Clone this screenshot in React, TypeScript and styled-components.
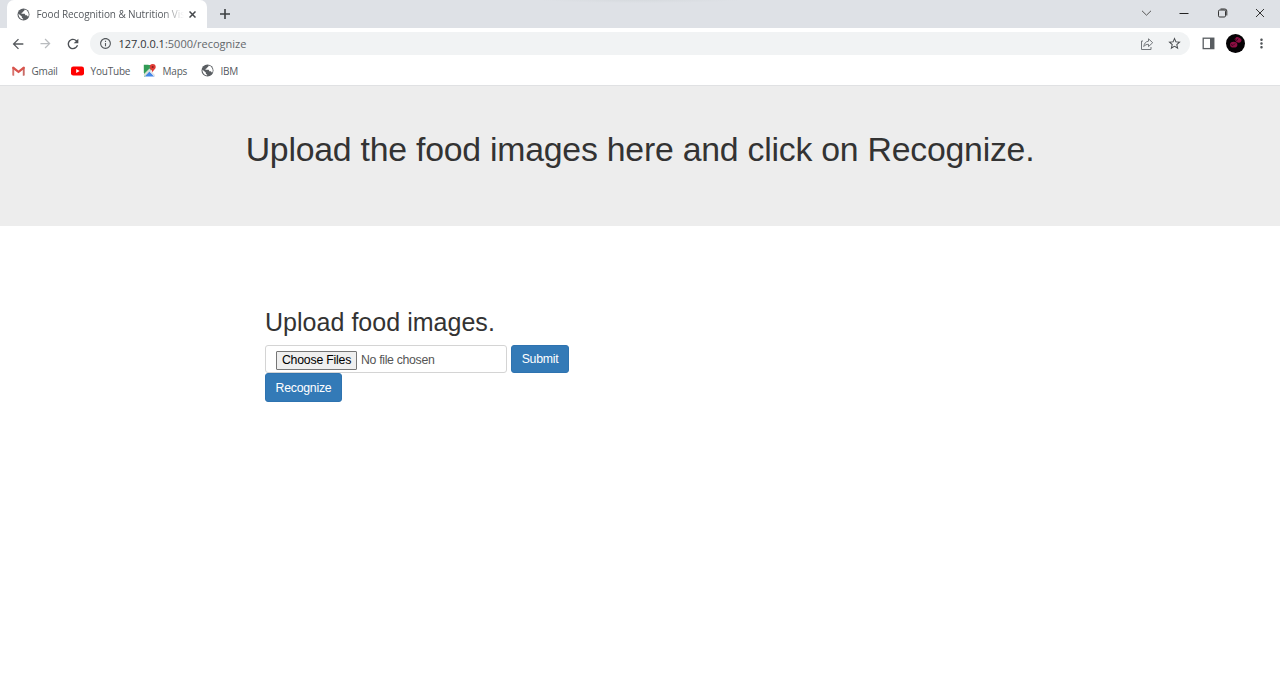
import React from "react";
import styled, { createGlobalStyle } from "styled-components";
import { MdInfoOutline, MdStarBorder, MdArrowBack, MdArrowForward, MdRefresh, MdMoreVert } from "react-icons/md";

const GlobalStyle = createGlobalStyle`
  * { box-sizing: border-box; }
  body { margin: 0; background: #fff; font-family: "Liberation Sans", Arial, sans-serif; color: #333; }
  svg { display: block; flex: none; }
`;

const Window = styled.div`
  height: 680px;
  display: flex;
  flex-direction: column;
  overflow: hidden;
`;

const Chrome = styled.header`
  font-family: "Open Sans", sans-serif;
  color: #5f6368;
`;

const TabStrip = styled.div`
  height: 28px;
  display: flex;
  background: radial-gradient(ellipse 100px 3px at 640px 0, #d6dade, transparent) #dee1e6;
  padding-left: 7px;
`;

const Tab = styled.div`
  width: 200px;
  height: 28px;
  display: flex;
  align-items: center;
  padding: 0 9px 0 10px;
  background: #fff;
  border-radius: 7px 7px 0 0;
`;

const TabTitle = styled.span`
  width: 147px;
  margin: 0 5px 0 6.5px;
  white-space: nowrap;
  font-size: 10px;
  line-height: 16px;
  letter-spacing: -0.09px;
  color: #55595e;
  mask-image: linear-gradient(90deg, #000 125px, transparent 147px);
`;

const NewTab = styled.div`
  padding: 8px 0 0 12px;
`;

const WindowControls = styled.div`
  margin-left: auto;
  display: flex;
  align-items: center;
  gap: 26.5px;
  height: 25px;
  padding-right: 15px;
`;

const Toolbar = styled.div`
  height: 30px;
  display: flex;
  align-items: center;
  padding: 1px 10px 0 10px;
`;

const NavButtons = styled.div`
  display: flex;
  gap: 12px;
  width: 80px;
`;

const AddressBar = styled.div`
  width: 1100px;
  height: 23px;
  display: flex;
  align-items: center;
  padding: 0 8px 0 8.5px;
  background: #f1f3f4;
  border-radius: 12px;
`;

const Address = styled.span`
  margin-left: 7px;
  font-size: 11px;
  line-height: 16px;
  color: #63676b;
  white-space: nowrap;
`;

const Host = styled.span`
  color: #303236;
`;

const AddressActions = styled.div`
  margin-left: auto;
  display: flex;
  align-items: center;
  gap: 13px;
`;

const ToolbarActions = styled.div`
  margin-left: 12px;
  display: flex;
  align-items: center;
`;

const Avatar = styled.div`
  margin: 0 9px 0 11px;
`;

const Bookmarks = styled.nav`
  height: 28px;
  display: flex;
  align-items: center;
  padding: 0 0 2px 12px;
  border-bottom: 1px solid #e0e1e3;
`;

const Bookmark = styled.div<{ $width: number }>`
  width: ${(p) => p.$width}px;
  display: flex;
  align-items: center;
  gap: 6.5px;
  font-size: 10px;
  line-height: 14px;
  letter-spacing: -0.2px;
  color: #55595e;
  white-space: nowrap;
`;

const Jumbotron = styled.section`
  height: 140px;
  padding-top: 43px;
  background: #ededed;
  text-align: center;
`;

const Title = styled.h1`
  margin: 0;
  font-size: 33.8px;
  font-weight: 400;
  line-height: 40px;
  letter-spacing: -0.23px;
  white-space: nowrap;
`;

const Content = styled.main`
  padding: 82px 0 0 265px;
`;

const Subtitle = styled.h2`
  margin: 0 0 8px;
  font-size: 25px;
  font-weight: 400;
  line-height: 29px;
  letter-spacing: 0.03px;
`;

const FormRow = styled.div`
  display: flex;
  gap: 4px;
`;

const FileField = styled.div`
  width: 242px;
  height: 28px;
  display: flex;
  align-items: center;
  gap: 4px;
  padding: 2px 10px 0;
  border: 1px solid #d4d4d4;
  border-radius: 3px;
  font-size: 12.3px;
  letter-spacing: -0.32px;
  color: #555;
`;

const ChooseButton = styled.button`
  width: 81px;
  height: 19px;
  padding: 0;
  border: 1px solid #767676;
  border-radius: 1px;
  background: #efefef;
  font: 12.3px/16px "Liberation Sans", Arial, sans-serif;
  letter-spacing: -0.22px;
  color: #000;
  white-space: nowrap;
`;

const PrimaryButton = styled.button<{ $width: number; $height: number }>`
  display: block;
  width: ${(p) => p.$width}px;
  height: ${(p) => p.$height}px;
  padding: 0;
  border: 1px solid #2e73b0;
  border-radius: 3px;
  background: #337ab7;
  color: #fff;
  font: 12.3px/18px "Liberation Sans", Arial, sans-serif;
  letter-spacing: -0.26px;
`;

const Globe = () => (
  <svg width="13" height="13" viewBox="0 0 13 13">
    <circle cx="6.5" cy="6.5" r="6" fill="#5a5e62" />
    <path d="M7.6 1.6c-.1 1.1-.5 1.7-1.5 1.8-.2 1-.9 1.2-1.6 1.5v.9h2.7c.8 0 1 .6 1 1.4h1.1c.7 0 1 .4 1.1 1l.9.3A5 5 0 0 0 7.6 1.6zM1.5 5.7c-.2 3.3 2 5.6 4.6 5.8v-1c-1 0-1.3-.5-1.3-1.4v-.5z" fill="#fff" />
  </svg>
);

export default function App() {
  return (
    <Window>
      <GlobalStyle />
      <Chrome>
        <TabStrip>
          <Tab>
            <Globe />
            <TabTitle>Food Recognition &amp; Nutrition Vis</TabTitle>
            <svg width="7" height="7" viewBox="0 0 7 7" stroke="#45484c" strokeWidth="1.5"><path d="M.5.5l6 6M6.5.5l-6 6" /></svg>
          </Tab>
          <NewTab>
            <svg width="12" height="12" viewBox="0 0 12 12" stroke="#3c4043" strokeWidth="1.6"><path d="M6 1v10M1 6h10" /></svg>
          </NewTab>
          <WindowControls>
            <svg width="11" height="10" viewBox="0 0 11 10" fill="none" stroke="#555" strokeWidth="1"><path d="M1 2.8l4.5 4.4L10 2.8" /></svg>
            <svg width="12" height="10" viewBox="0 0 12 10" stroke="#222"><path d="M1.5 5.5h9" /></svg>
            <svg width="12" height="10" viewBox="0 0 12 10" fill="none" stroke="#333"><rect x="1.5" y="2" width="7" height="7" rx="1.2" /><path d="M3.5 1h4.3a2 2 0 0 1 2 2v4.5" /></svg>
            <svg width="10" height="10" viewBox="0 0 10 10" stroke="#333"><path d="M1 1l8 8M9 1l-8 8" /></svg>
          </WindowControls>
        </TabStrip>
        <Toolbar>
          <NavButtons>
            <MdArrowBack size={16} color="#55595d" />
            <MdArrowForward size={15} color="#b9bcbf" />
            <MdRefresh size={16} color="#4d5156" />
          </NavButtons>
          <AddressBar>
            <MdInfoOutline size={13} color="#55595d" />
            <Address><Host>127.0.0.1</Host>:5000/recognize</Address>
            <AddressActions>
              <svg width="14" height="14" viewBox="0 0 14 14" fill="none" stroke="#73777b" strokeWidth="1" strokeLinejoin="round">
                <path d="M3 4H1.5v8.5h9.5V10" />
                <path d="M3.8 9.5C4.2 6.4 5.8 4.4 8.5 4.2V1.8l4.2 3.9-4.2 3.9V7.3C6.5 7.3 5 8 3.8 9.5z" />
              </svg>
              <MdStarBorder size={15} color="#484c50" />
            </AddressActions>
          </AddressBar>
          <ToolbarActions>
            <svg width="13" height="13" viewBox="0 0 13 13"><rect x="1.2" y="1.2" width="10.6" height="10.4" fill="none" stroke="#595d61" strokeWidth="1.3" /><path d="M8 1h4v11H8z" fill="#595d61" /></svg>
            <Avatar>
              <svg width="19" height="19" viewBox="0 0 19 19"><circle cx="9.5" cy="9.5" r="9.5" fill="#050305" /><g fill="#8d0e43"><ellipse cx="12.2" cy="5.8" rx="3.3" ry="2.5" transform="rotate(25 12 6)" /><ellipse cx="7.7" cy="10.7" rx="3.7" ry="2.9" /></g><path d="M8 5l3 1.5 1-2M5 10.5l2 1 2-2" stroke="#3c061f" fill="none" /></svg>
            </Avatar>
            <MdMoreVert size={15} color="#505458" />
          </ToolbarActions>
        </Toolbar>
        <Bookmarks>
          <Bookmark $width={59}>
            <svg width="13" height="10" viewBox="0 0 13 10"><path d="M.3 1h1.9v8.7H1a.7.7 0 0 1-.7-.7z" fill="#d87570" /><path d="M10.8 1h1.9v8a.7.7 0 0 1-.7.7h-1.2z" fill="#c96b66" /><path d="M.3 1.6Q.6 0 2.1.9l4.4 3.5L10.9.9q1.5-.9 1.8.7v1L6.5 7.2.3 2.6z" fill="#d9534c" /></svg>
            Gmail
          </Bookmark>
          <Bookmark $width={72}>
            <svg width="13" height="10" viewBox="0 0 13 10"><rect y=".4" width="13" height="9.2" rx="2.4" fill="#f00" /><path d="M5.2 3v4l3.5-2z" fill="#fff" /></svg>
            YouTube
          </Bookmark>
          <Bookmark $width={58}>
            <svg width="13" height="13" viewBox="0 0 13 13"><path d="M1 1h7v5L2 12.5H1z" fill="#34a35a" /><path d="M6 7l5.5 5.5H2z" fill="#4285e8" /><path d="M7 6l5 5v1.5h-1L6 7z" fill="#dfe3e8" /><path d="M.5 10.5l6-6 1.5 1.5-6.3 6.5z" fill="#d9dfd7" /><path d="M.8.8h4.7v3.7L.8 9z" fill="#319b56" /><path d="M9.7 0a3 3 0 0 1 3 3c0 2.3-2.4 2.8-3 5.5C9 5.8 6.7 5.3 6.7 3a3 3 0 0 1 3-3z" fill="#df3c36" /><circle cx="9.7" cy="3" r="1" fill="#8b1d1a" /></svg>
            Maps
          </Bookmark>
          <Bookmark $width={45}>
            <Globe />
            IBM
          </Bookmark>
        </Bookmarks>
      </Chrome>
      <Jumbotron>
        <Title>Upload the food images here and click on Recognize.</Title>
      </Jumbotron>
      <Content>
        <Subtitle>Upload food images.</Subtitle>
        <FormRow>
          <FileField>
            <ChooseButton>Choose Files</ChooseButton>
            <span>No file chosen</span>
          </FileField>
          <PrimaryButton $width={58} $height={28}>Submit</PrimaryButton>
        </FormRow>
        <PrimaryButton $width={77} $height={29}>Recognize</PrimaryButton>
      </Content>
    </Window>
  );
}
